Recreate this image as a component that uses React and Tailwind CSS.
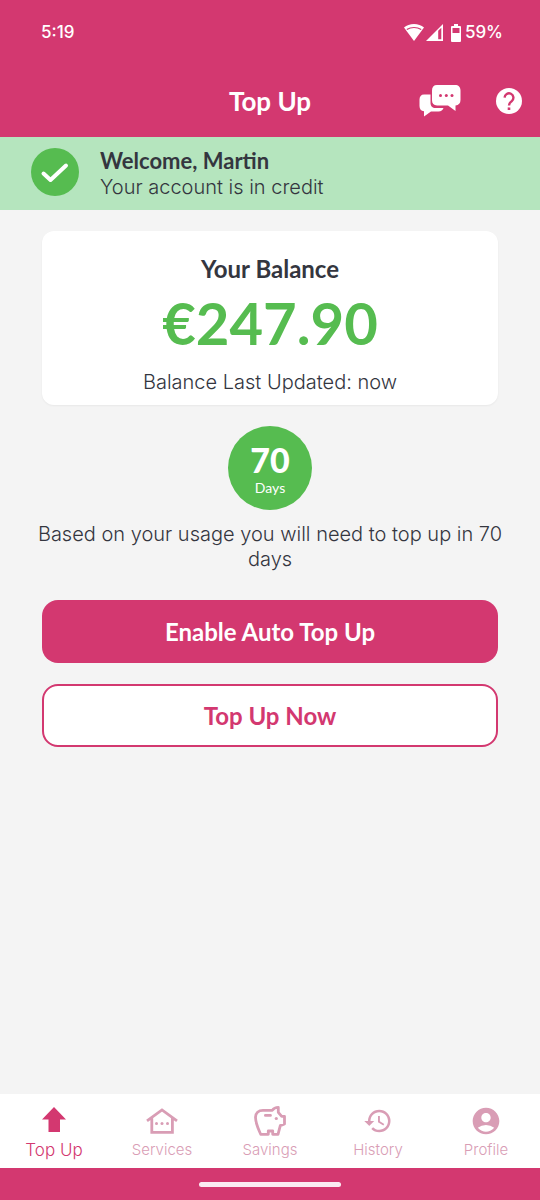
import React from "react";
import { MdAccountCircle, MdHistory } from "react-icons/md";

/* Status bar */

function WifiIcon() {
  return (
    <svg viewBox="0 0 20 17" className="w-5 h-[17px]" aria-hidden="true">
      <path fill="currentColor" d="M10 0C6.100 0 2.600 1.300 0 3.500L10 17 20 3.500C17.400 1.300 13.900 0 10 0Z" />
      <path fill="none" stroke="#d33870" strokeWidth="1.200" d="M2.800 5.600C5 4.200 7.400 3.500 10 3.500s5 .7 7.200 2.100" />
    </svg>
  );
}

function SignalIcon() {
  return (
    <svg viewBox="0 0 17 17" className="w-[17px] h-[17px]" aria-hidden="true">
      <path fill="currentColor" d="M17 0v17H0L17 0Z" />
      <path fill="#d33870" d="M12.200 6.800 15.300 3.700v11.600h-3.100Z" />
    </svg>
  );
}

function BatteryIcon() {
  return (
    <svg viewBox="0 0 10 18" className="w-[10px] h-[18px]" aria-hidden="true">
      <path fill="currentColor" d="M3 0h4v2h2a1 1 0 0 1 1 1v14a1 1 0 0 1-1 1H1a1 1 0 0 1-1-1V3a1 1 0 0 1 1-1h2V0Z" />
      <path fill="#d33870" d="M1.500 4h7v5h-7z" />
    </svg>
  );
}

/* Header */

function ChatIcon() {
  return (
    <svg viewBox="0 0 42 32" className="w-[42px] h-8" aria-hidden="true">
      <path fill="currentColor" d="M5 9.500h6.500V18c0 3 2 5 5 5h8c-.8 2-2.300 3.500-5 3.500h-7.500L5 31.500v-5.200C2 26 .5 24 .5 21v-6.500c0-3 1.500-5 4.500-5Z" />
      <path fill="currentColor" d="M18 0h18c3.500 0 5.500 2 5.500 5.500V15c0 3.300-1.700 5.200-5 5.500v5.500L29 20.500H18c-3.300 0-5-1.900-5-5.200V5.500C13 2 14.700 0 18 0Z" />
      <g fill="#d33870">
        <circle cx="21.500" cy="10.500" r="1.500" />
        <circle cx="27.300" cy="10.500" r="1.500" />
        <circle cx="33" cy="10.500" r="1.500" />
      </g>
    </svg>
  );
}

function HelpIcon() {
  return (
    <svg viewBox="0 0 26 26" className="w-[26px] h-[26px]" aria-hidden="true">
      <circle cx="13" cy="13" r="13" fill="currentColor" />
      <path fill="none" stroke="#d33870" strokeWidth="2.400" d="M8.600 9.600a4.400 4.400 0 1 1 7.200 3.500c-1.700 1.400-2.800 2.100-2.800 4.500" />
      <path fill="#d33870" d="M11.700 19.400h2.600V22h-2.600z" />
    </svg>
  );
}

function CheckIcon() {
  return (
    <svg viewBox="0 0 48 48" className="w-12 h-12 shrink-0" aria-hidden="true">
      <circle cx="24" cy="24" r="24" fill="#56bc50" />
      <path fill="none" stroke="#fff" strokeWidth="4" strokeLinecap="round" strokeLinejoin="round" d="M12.500 25.500 19.500 32 35 17.500" />
    </svg>
  );
}

/* Tab bar */

function ArrowUpIcon() {
  return (
    <svg viewBox="0 0 24 28" className="w-6 h-7" aria-hidden="true">
      <path fill="currentColor" d="M12 0 24 12.500h-6V25H6.500V12.500H0L12 0Z" />
    </svg>
  );
}

function HouseIcon() {
  return (
    <svg viewBox="0 0 32 26" className="w-8 h-[26px]" aria-hidden="true">
      <path fill="none" stroke="currentColor" strokeWidth="2.800" d="M1 12.800 16 1.900l15 10.900M5.800 10v14.300h20.600V10" />
      <g fill="currentColor">
        <circle cx="10.500" cy="15.500" r="1.500" />
        <circle cx="16" cy="15.500" r="1.500" />
        <circle cx="21.500" cy="15.500" r="1.500" />
      </g>
    </svg>
  );
}

function PiggyIcon() {
  return (
    <svg viewBox="0 0 32 30" className="w-8 h-[30px]" aria-hidden="true">
      <path
        fill="none"
        stroke="currentColor"
        strokeWidth="2.800"
        strokeLinejoin="round"
        d="M9 4.300H18.300C19.500 2.500 21.500 1.400 24.300 1.400V6.300L27.700 10.300H30.500V18L26.300 19.600 24 28.300H18.700V25H14.300V28.300H6.700C4 22 1.500 17.500 1.500 11.300 1.500 7.200 4.500 4.300 9 4.300Z"
      />
      <path stroke="currentColor" strokeWidth="2.600" strokeLinecap="round" d="M11.300 9.400h5.200" />
      <circle cx="22.300" cy="12.500" r="1.600" fill="currentColor" />
    </svg>
  );
}

const TABS = [
  { label: "Top Up", icon: <ArrowUpIcon />, active: true },
  { label: "Services", icon: <HouseIcon /> },
  { label: "Savings", icon: <PiggyIcon /> },
  { label: "History", icon: <MdHistory className="w-[30px] h-[30px]" /> },
  { label: "Profile", icon: <MdAccountCircle className="w-8 h-8" /> },
];

function Tab({ label, icon, active }) {
  return (
    <a
      href="#"
      aria-current={active ? "page" : undefined}
      className={`flex flex-1 flex-col items-center font-['Inter',sans-serif] font-light leading-5 ${
        active ? "text-[#d33870] text-[17px]" : "text-[#d99db5] text-[15px]"
      }`}
    >
      <span className="flex h-8 items-center justify-center">{icon}</span>
      <span className="mt-[3px]">{label}</span>
    </a>
  );
}

export default function App() {
  return (
    <div className="flex min-h-screen flex-col bg-[#f4f4f4] font-['Lato','Liberation_Sans',sans-serif] text-[#34363f]">
      <header className="bg-[#d33870] text-white">
        <div className="flex h-[65px] items-center justify-between pl-[41px] pr-[37px] font-['Inter','Roboto',sans-serif] text-[17px] font-medium">
          <span>5:19</span>
          <div className="flex items-center">
            <WifiIcon />
            <span className="ml-0.5"><SignalIcon /></span>
            <span className="ml-2"><BatteryIcon /></span>
            <span className="ml-1">59%</span>
          </div>
        </div>
        <div className="grid h-[72px] grid-cols-[1fr_auto_1fr] items-center pr-[18px]">
          <h1 className="col-start-2 pl-[18px] text-[26px] font-bold leading-8">Top Up</h1>
          <div className="flex items-center justify-end gap-[35px]">
            <button type="button" aria-label="Messages"><ChatIcon /></button>
            <button type="button" aria-label="Help"><HelpIcon /></button>
          </div>
        </div>
      </header>

      {/* Account status */}
      <section className="flex h-[73px] items-start gap-[21px] bg-[#b5e5be] px-[31px] pt-[11px]">
        <CheckIcon />
        <div className="leading-[26px]">
          <p className="text-[22px] font-bold">Welcome, Martin</p>
          <p className="font-['Inter',sans-serif] text-xl leading-[26px] font-light">Your account is in credit</p>
        </div>
      </section>

      <main className="flex flex-1 flex-col items-center px-[42px] pt-[21px] text-center">
        <section className="flex w-full flex-col items-center rounded-xl bg-white pt-6 pb-[10px] shadow-xs">
          <h2 className="text-2xl font-bold leading-7">Your Balance</h2>
          <p className="mt-1 text-[58px] font-bold leading-[72px] text-[#56bc50]">€247.90</p>
          <p className="mt-[10px] font-['Inter',sans-serif] text-xl font-light leading-[26px]">Balance Last Updated: now</p>
        </section>

        <div className="mt-[21px] flex h-[84px] w-[84px] flex-col items-center rounded-full bg-[#56bc50] pt-4 text-white">
          <span className="text-[34px] font-black leading-9">70</span>
          <span className="text-sm leading-5">Days</span>
        </div>

        <p className="-mx-2 mt-3 self-stretch font-['Inter',sans-serif] text-xl font-light leading-[25px]">
          Based on your usage you will need to top up in 70 days
        </p>

        <button type="button" className="mt-7 h-[63px] w-full rounded-2xl bg-[#d33870] text-2xl font-bold text-white">
          Enable Auto Top Up
        </button>
        <button type="button" className="mt-[21px] h-[63px] w-full rounded-2xl border-2 border-[#d33870] bg-white text-2xl font-bold text-[#d33870]">
          Top Up Now
        </button>
      </main>

      <nav className="flex h-[74px] bg-white pt-[11px]">
        {TABS.map((tab) => (
          <Tab key={tab.label} {...tab} />
        ))}
      </nav>

      <footer className="flex h-8 items-center justify-center bg-[#d33870]">
        <div className="h-[5px] w-[142px] rounded-full bg-[#fbeaf2]" />
      </footer>
    </div>
  );
}
